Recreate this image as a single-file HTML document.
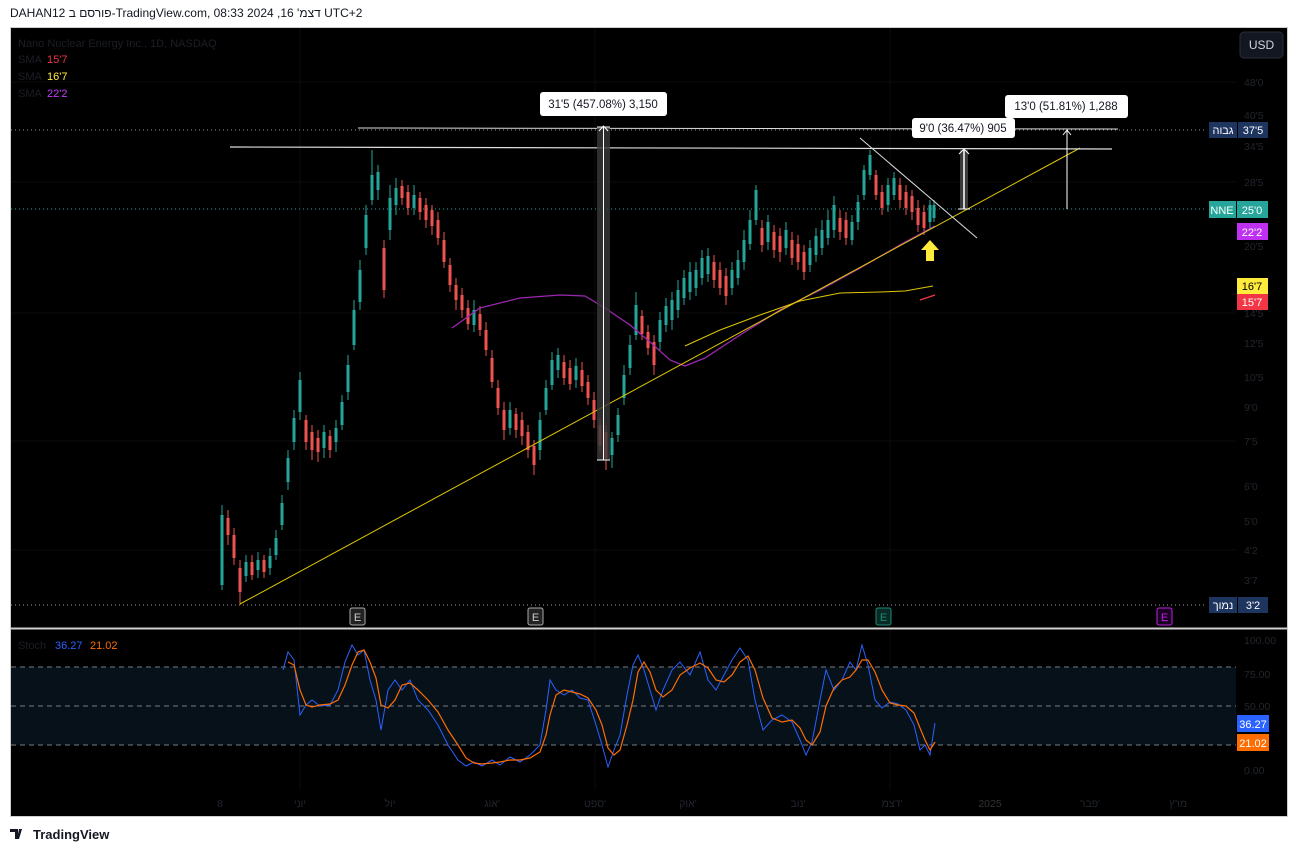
<!DOCTYPE html>
<html><head><meta charset="utf-8"><style>
html,body{margin:0;padding:0;background:#fff;width:1298px;height:853px;overflow:hidden;font-family:"Liberation Sans","Noto Sans CJK SC",sans-serif}
#hdr{position:absolute;left:10px;top:6px;font-size:12px;color:#131722}
#chart{position:absolute;left:10px;top:27px;width:1278px;height:790px;background:#000;border:1px solid #cfcfcf;box-sizing:border-box}
svg text{font-family:"Liberation Sans","Noto Sans CJK SC",sans-serif}
#foot{position:absolute;left:10px;top:827px;font-size:13px;color:#131722;font-weight:bold}
</style></head><body>
<div id="hdr">DAHAN12 פורסם ב-TradingView.com, 08:33 2024 ,16 'דצמ UTC+2</div>
<div id="chart"></div>
<svg width="1298" height="853" style="position:absolute;left:0;top:0">
<g stroke="#0c0c0c" stroke-width="1">
<line x1="11" y1="82" x2="1236" y2="82"/><line x1="11" y1="182" x2="1236" y2="182"/><line x1="11" y1="313" x2="1236" y2="313"/><line x1="11" y1="441" x2="1236" y2="441"/><line x1="11" y1="550" x2="1236" y2="550"/>
<line x1="300" y1="28" x2="300" y2="790"/><line x1="595" y1="28" x2="595" y2="790"/><line x1="890" y1="28" x2="890" y2="790"/>
</g>
<rect x="11" y="667" width="1225" height="78" fill="#07111a"/>
<g stroke="#787b86" stroke-dasharray="5,4" stroke-width="1">
<line x1="11" y1="667" x2="1236" y2="667"/><line x1="11" y1="706" x2="1236" y2="706"/><line x1="11" y1="745" x2="1236" y2="745"/>
</g>
<line x1="11" y1="628.5" x2="1287" y2="628.5" stroke="#d0d0d0" stroke-width="2"/>
<line x1="11" y1="130" x2="1205" y2="130" stroke="#9598a1" stroke-dasharray="1,3"/>
<line x1="11" y1="209" x2="1205" y2="209" stroke="#26a69a" stroke-dasharray="1,3"/>
<line x1="11" y1="605" x2="1205" y2="605" stroke="#9598a1" stroke-dasharray="1,3"/>
<!-- candles green -->
<path stroke="#26a69a" stroke-width="1" fill="none" d="M222,505V590M246,555V582M258,552V578M270,548V575M276,530V560M282,495V530M288,450V490M294,410V450M300,372V420M324,425V458M336,420V452M342,395V430M348,355V400M354,300V350M360,260V310M366,205V255M372,150V205M378,165V200M390,185V240M396,178V215M414,185V215M474,300V332M510,402V435M540,412V460M546,380V415M552,352V390M558,348V378M576,358V388M612,432V468M618,408V442M624,365V405M630,335V375M636,292V340M660,312V350M666,298V332M672,292V330M678,280V318M684,270V305M690,262V300M696,262V296M702,250V285M708,248V282M732,262V295M738,250V285M744,230V270M750,210V250M756,185V225M768,215V250M786,222V255M810,240V272M816,228V262M822,220V255M828,210V245M834,196V238M852,215V245M858,195V230M864,165V200M870,150V180M888,178V212M894,172V200M930,200V228M934,200V222"/>
<path stroke="#26a69a" stroke-width="3" fill="none" d="M222,515V585M246,562V576M258,560V570M270,556V568M276,538V555M282,503V525M288,458V482M294,418V442M300,380V412M324,432V448M336,428V442M342,402V425M348,365V392M354,310V345M360,270V302M366,215V248M372,175V200M378,172V190M390,198V230M396,188V205M414,195V208M474,310V325M510,410V428M540,420V450M546,388V410M552,360V385M558,355V370M576,366V380M612,438V455M618,415V435M624,375V398M630,345V368M636,305V335M660,320V342M666,306V325M672,300V320M678,290V310M684,278V298M690,272V292M696,270V288M702,258V278M708,256V274M732,270V288M738,260V278M744,240V262M750,220V244M756,190V220M768,222V242M786,230V248M810,248V265M816,236V255M822,230V248M828,220V238M834,205V230M852,222V240M858,202V222M864,170V195M870,155V175M888,185V205M894,178V195M930,205V222M934,205V218"/>
<!-- candles red -->
<path stroke="#ef5350" stroke-width="1" fill="none" d="M228,510V545M234,528V565M240,560V605M252,555V580M264,555V578M306,415V450M312,425V460M318,430V462M330,430V458M384,240V298M402,180V205M408,185V215M420,192V220M426,198V228M432,205V235M438,212V245M444,232V268M450,258V292M456,278V310M462,288V318M468,300V330M480,306V336M486,322V356M492,350V388M498,380V415M504,402V440M516,408V438M522,412V445M528,425V458M534,440V475M564,355V385M570,360V390M582,362V392M588,375V405M594,392V428M600,418V452M606,425V470M642,310V340M648,325V355M654,335V375M714,255V288M720,262V295M726,268V305M762,220V252M774,225V258M780,228V262M792,232V265M798,235V270M804,245V280M840,210V240M846,212V245M876,170V200M882,185V215M900,178V208M906,185V215M912,190V220M918,200V232M924,205V235"/>
<path stroke="#ef5350" stroke-width="3" fill="none" d="M228,518V535M234,535V558M240,568V592M252,562V575M264,560V572M306,420V442M312,432V450M318,438V452M330,436V450M384,248V290M402,186V198M408,192V208M420,198V212M426,205V220M432,210V226M438,220V238M444,240V262M450,265V285M456,285V300M462,295V310M468,308V324M480,314V330M486,330V350M492,358V382M498,388V408M504,410V430M516,414V430M522,420V436M528,432V450M534,446V465M564,362V378M570,368V384M582,370V386M588,382V398M594,400V420M600,425V445M606,432V458M642,316V334M648,332V348M654,342V365M714,262V280M720,270V288M726,276V296M762,228V245M774,232V250M780,236V252M792,240V258M798,244V262M804,252V272M840,218V232M846,220V238M876,175V195M882,192V208M900,185V200M906,192V208M912,196V212M918,208V225M924,212V228"/>
<!-- SMAs -->
<polyline fill="none" stroke="#9c27b0" stroke-width="1.3" points="452,328 480,308 520,298 560,295 585,296 605,308 630,325 650,342 670,360 685,366 705,358 740,335 780,310 820,290 860,268 900,245 935,226"/>
<polyline fill="none" stroke="#e0c800" stroke-width="1" points="685,346 720,330 760,315 800,301 840,293 880,292 905,291 933,286"/>
<line x1="920" y1="300" x2="935" y2="295" stroke="#f23645" stroke-width="1.3"/>
<line x1="240" y1="604" x2="1080" y2="148" stroke="#e0c800" stroke-width="1"/>
<line x1="230" y1="147" x2="1112" y2="149" stroke="#ddd" stroke-width="1.2"/>
<line x1="358" y1="128" x2="1118" y2="129" stroke="#ddd" stroke-width="1"/>
<line x1="860" y1="138" x2="977" y2="238" stroke="#ddd" stroke-width="1"/>
<rect x="597" y="127" width="13" height="333" fill="#3a3a3a" opacity="0.8"/>
<line x1="603.5" y1="127" x2="603.5" y2="460" stroke="#fff"/>
<line x1="597" y1="460" x2="610" y2="460" stroke="#fff"/><line x1="597" y1="127" x2="610" y2="127" stroke="#fff"/>
<polyline points="599,131 603.5,126 608,131" fill="none" stroke="#fff"/>
<rect x="540" y="92" width="127" height="24" rx="3" fill="#fff"/>
<text x="603" y="108" font-size="11.5" text-anchor="middle" fill="#131722">31'5 (457.08%) 3,150</text>
<rect x="960" y="150" width="8" height="59" fill="#3a3a3a"/>
<line x1="964" y1="150" x2="964" y2="209" stroke="#fff" stroke-width="1.5"/>
<line x1="958" y1="209" x2="970" y2="209" stroke="#fff"/>
<polyline points="959,154 964,149 969,154" fill="none" stroke="#fff"/>
<rect x="912" y="118" width="103" height="20" rx="3" fill="#fff"/>
<text x="963" y="132" font-size="11.5" text-anchor="middle" fill="#131722">9'0 (36.47%) 905</text>
<line x1="1067" y1="130" x2="1067" y2="209" stroke="#fff"/>
<polyline points="1063,135 1067,130 1071,135" fill="none" stroke="#fff"/>
<rect x="1005" y="95" width="123" height="23" rx="3" fill="#fff"/>
<text x="1066" y="110" font-size="11.5" text-anchor="middle" fill="#131722">13'0 (51.81%) 1,288</text>
<polygon points="930,240 939,250 934,250 934,261 926,261 926,250 921,250" fill="#ffeb3b"/>
<g font-size="11" text-anchor="middle">
<rect x="350" y="608" width="15" height="17" rx="2" fill="#222" stroke="#aaa"/><text x="357.5" y="621" fill="#ccc">E</text>
<rect x="528" y="608" width="15" height="17" rx="2" fill="#222" stroke="#aaa"/><text x="535.5" y="621" fill="#ccc">E</text>
<rect x="876" y="608" width="15" height="17" rx="2" fill="#0a2a26" stroke="#1a8a7a"/><text x="883.5" y="621" fill="#1a8a7a">E</text>
<rect x="1157" y="608" width="15" height="17" rx="2" fill="#1a0022" stroke="#c020e0"/><text x="1164.5" y="621" fill="#c020e0">E</text>
</g>
<!-- stoch -->
<polyline fill="none" stroke="#2962ff" stroke-width="1" points="283,670 288,652 294,660 300,715 306,705 312,700 320,706 330,705 338,690 345,662 352,645 358,655 364,650 370,680 376,700 381,730 388,690 395,680 402,690 410,680 418,700 428,710 438,725 448,745 458,760 466,766 474,762 482,766 492,760 500,765 510,757 520,762 530,755 540,745 546,710 550,680 556,690 564,695 572,690 580,698 588,700 596,725 602,745 608,767 614,750 620,735 627,695 633,665 638,655 644,670 650,690 656,710 663,690 672,670 680,662 690,675 700,652 708,680 716,690 724,675 732,660 740,648 748,660 755,700 763,730 772,720 782,715 792,722 800,740 806,755 812,742 820,700 826,670 834,690 842,680 850,662 856,670 862,645 868,665 875,700 882,708 890,702 898,704 906,710 914,725 920,750 925,745 930,755 935,723"/>
<polyline fill="none" stroke="#ff6d00" stroke-width="1.2" points="288,662 294,665 300,690 306,705 312,707 320,705 330,704 338,700 345,685 352,665 358,652 364,650 370,662 376,678 381,705 388,708 395,700 402,685 410,683 418,690 428,700 438,712 448,730 458,745 466,758 474,763 482,764 492,763 500,762 510,760 520,760 530,758 540,752 546,735 550,715 556,695 564,690 572,692 580,694 588,698 596,710 602,725 608,748 614,755 620,750 627,725 633,700 638,672 644,662 650,672 656,690 663,697 672,690 680,675 690,668 700,663 708,668 716,680 724,682 732,675 740,662 748,656 755,670 763,698 772,718 782,722 792,720 800,728 806,740 812,745 820,732 826,706 834,688 842,680 850,677 856,670 862,660 868,660 875,672 882,690 890,703 898,705 906,706 914,713 920,728 925,740 930,750 935,742"/>
<g font-size="11">
<text x="18" y="47" fill="#1c1e26">Nano Nuclear Energy Inc., 1D, NASDAQ</text>
<text x="18" y="63" fill="#1c1e26">SMA</text><text x="47" y="63" fill="#f23645">15'7</text>
<text x="18" y="80" fill="#1c1e26">SMA</text><text x="47" y="80" fill="#ffeb3b">16'7</text>
<text x="18" y="97" fill="#1c1e26">SMA</text><text x="47" y="97" fill="#c040fb">22'2</text>
<text x="18" y="649" fill="#1c1e26">Stoch</text><text x="55" y="649" fill="#2962ff">36.27</text><text x="90" y="649" fill="#ff6d00">21.02</text>
</g>
<g font-size="10.5" fill="#22252e">
<text x="1244" y="86">48'0</text><text x="1244" y="119">40'5</text><text x="1244" y="150">34'5</text><text x="1244" y="186">28'5</text><text x="1244" y="250">20'5</text><text x="1244" y="286">17'5</text><text x="1244" y="317">14'5</text><text x="1244" y="347">12'5</text><text x="1244" y="381">10'5</text><text x="1244" y="411">9'0</text><text x="1244" y="445">7'5</text><text x="1244" y="490">6'0</text><text x="1244" y="525">5'0</text><text x="1244" y="554">4'2</text><text x="1244" y="584">3'7</text>
<text x="1244" y="644">100.00</text><text x="1244" y="678">75.00</text><text x="1244" y="710">50.00</text><text x="1244" y="774">0.00</text>
</g>
<rect x="1240" y="32" width="43" height="26" rx="4" fill="#131722" stroke="#2a2e39"/>
<text x="1261.5" y="49" font-size="12" fill="#d1d4dc" text-anchor="middle">USD</text>
<g font-size="11" text-anchor="middle" fill="#fff">
<rect x="1209" y="122" width="28" height="16" fill="#1e3560"/><text x="1223" y="134">גבוה</text>
<rect x="1238" y="122" width="30" height="16" fill="#1e3560"/><text x="1253" y="134">37'5</text>
<rect x="1209" y="201" width="27" height="17" fill="#26a69a"/><text x="1222" y="214">NNE</text>
<rect x="1237" y="201" width="31" height="17" fill="#26a69a"/><text x="1252" y="214">25'0</text>
<rect x="1237" y="223" width="31" height="17" fill="#c030f0"/><text x="1252" y="236">22'2</text>
<rect x="1237" y="278" width="31" height="16" fill="#ffeb3b"/><text x="1252" y="290" fill="#000">16'7</text>
<rect x="1237" y="294" width="31" height="16" fill="#f23645"/><text x="1252" y="306">15'7</text>
<rect x="1209" y="597" width="28" height="16" fill="#1e3560"/><text x="1223" y="609">נמוך</text>
<rect x="1238" y="597" width="30" height="16" fill="#1e3560"/><text x="1253" y="609">3'2</text>
<rect x="1237" y="715" width="32" height="17" fill="#2962ff"/><text x="1253" y="728">36.27</text>
<rect x="1237" y="734" width="32" height="17" fill="#ff6d00"/><text x="1253" y="747">21.02</text>
</g>
<g font-size="10.5" fill="#22252e" text-anchor="middle">
<text x="220" y="807">8</text><text x="300" y="807">יוני</text><text x="390" y="807">יול</text><text x="492" y="807">אוג'</text><text x="595" y="807">ספט'</text><text x="688" y="807">אוק'</text><text x="798" y="807">נוב'</text><text x="892" y="807">דצמ'</text><text x="990" y="807" fill="#333">2025</text><text x="1090" y="807">פבר'</text><text x="1178" y="807">מרץ</text>
</g>
<!-- TV logo -->
<path d="M10,829h8v10h-3v-7h-5z M19,829h3l-3,10h-2z" fill="#131722"/>
</svg>
<div id="foot" style="left:33px">TradingView</div>
</body></html>
